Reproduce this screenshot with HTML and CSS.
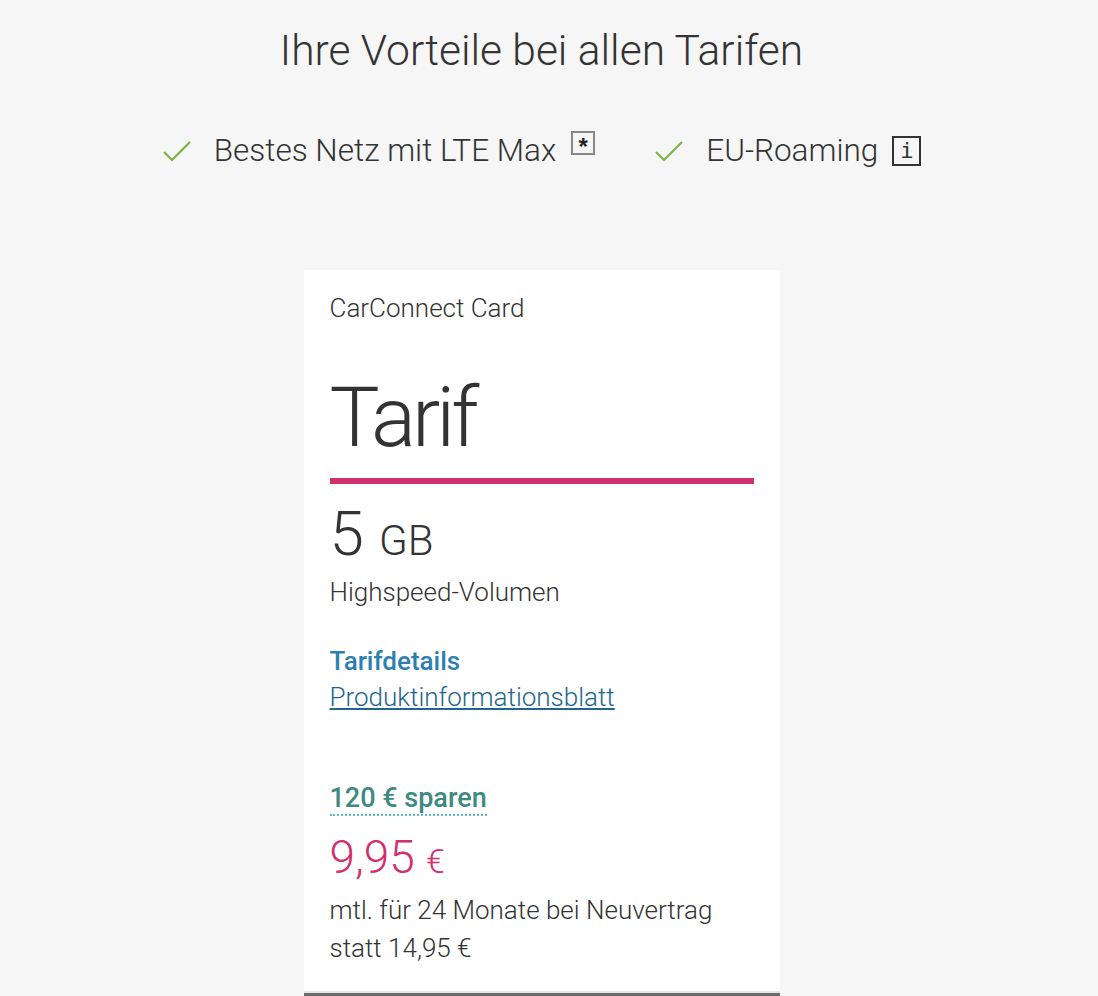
FILE: index.html
```html
<!DOCTYPE html>
<html lang="de">
<head>
<meta charset="UTF-8">
<meta name="viewport" content="width=device-width, initial-scale=1.0">
<title>CarConnect Tarif</title>
<link rel="stylesheet" href="styles.css">
</head>
<body>

<div class="page">
    <h1 class="title">Ihre Vorteile bei allen Tarifen</h1>

    <ul class="benefits">
        <li class="benefit">
            <svg class="check" width="30" height="24" viewBox="0 0 30 24"><path d="M2 13 L10 21 L28 3" fill="none" stroke="#7cb342" stroke-width="2.2"/></svg>
            <span>Bestes Netz mit LTE Max</span>
            <span class="star-box">*</span>
        </li>
        <li class="benefit">
            <svg class="check" width="30" height="24" viewBox="0 0 30 24"><path d="M2 13 L10 21 L28 3" fill="none" stroke="#7cb342" stroke-width="2.2"/></svg>
            <span>EU-Roaming</span>
            <span class="info-box">i</span>
        </li>
    </ul>

    <div class="card">
        <div class="card-body">
            <div class="product">CarConnect Card</div>
            <div class="tariff">Tarif</div>
            <div class="rule"></div>

            <div class="volume"><span class="volume-num">5</span> <span class="volume-unit">GB</span></div>
            <div class="volume-label">Highspeed-Volumen</div>

            <div class="links">
                <a href="#" class="details-link">Tarifdetails</a>
                <a href="#" class="pib-link">Produktinformationsblatt</a>
            </div>

            <div class="saving"><span>120 € sparen</span></div>
            <div class="price"><span class="price-num">9,95</span> <span class="price-cur">€</span></div>
            <div class="price-note">mtl. für 24 Monate bei Neuvertrag</div>
            <div class="price-note">statt 14,95 €</div>
        </div>
        <div class="card-foot"></div>
    </div>
</div>

</body>
</html>
```

FILE: styles.css
```css
body {
    margin: 0;
    background-color: #f6f6f6;
    font-family: Roboto, "Liberation Sans", sans-serif;
    color: #333;
}
.page {
    width: 1083px;
    display: flex;
    flex-direction: column;
    align-items: center;
}
.title {
    margin: 23px 0 0;
    font-size: 42.5px;
    font-weight: 300;
    line-height: 56px;
}
.benefits {
    list-style: none;
    margin: 52px 0 0;
    padding: 0;
    display: flex;
    gap: 59px;
}
.benefit {
    display: flex;
    align-items: center;
    font-size: 31.5px;
    font-weight: 300;
    line-height: 40px;
}
.check {
    margin-right: 22px;
}
.star-box {
    align-self: flex-start;
    margin-left: 15px;
    margin-top: 0;
    width: 20px;
    height: 20px;
    border: 2px solid #888;
    font-size: 24px;
    font-weight: bold;
    line-height: 28px;
    text-align: center;
    font-family: "Liberation Sans", sans-serif;
    color: #222;
}
.info-box {
    margin-left: 14px;
    width: 25px;
    height: 26px;
    border: 2px solid #333;
    font-size: 22px;
    line-height: 26px;
    text-align: center;
    font-family: "DejaVu Sans Mono", monospace;
}
.card {
    margin-top: 99px;
    width: 476px;
    background-color: #fff;
}
.card-body {
    padding: 22px 26px 24px;
}
.product {
    font-size: 26px;
    font-weight: 300;
    line-height: 32px;
}
.tariff {
    margin-top: 44px;
    font-size: 84px;
    font-weight: 300;
    letter-spacing: -4px;
    line-height: 100px;
}
.rule {
    margin-top: 10px;
    height: 6px;
    background-color: #d22f6e;
}
.volume {
    margin-top: 18px;
    font-size: 62px;
    font-weight: 300;
    line-height: 64px;
}
.volume-unit {
    font-size: 42px;
}
.volume-label {
    font-size: 26px;
    font-weight: 300;
    line-height: 38px;
}
.links {
    margin-top: 32px;
    display: flex;
    flex-direction: column;
    align-items: flex-start;
}
.details-link {
    font-size: 26px;
    font-weight: 500;
    line-height: 36px;
    color: #2d7fb0;
    text-decoration: none;
}
.pib-link {
    font-size: 26px;
    font-weight: 300;
    line-height: 36px;
    color: #22668f;
}
.saving {
    margin-top: 65px;
    font-size: 27px;
    font-weight: 500;
    line-height: 36px;
    color: #3e8a82;
}
.saving span {
    border-bottom: 2px dotted #5bb7e0;
}
.price {
    margin-top: 11px;
    font-size: 46px;
    color: #d22f6e;
    font-weight: 300;
    line-height: 60px;
}
.price-cur {
    font-size: 34px;
}
.price-note {
    font-size: 26px;
    font-weight: 300;
    line-height: 38px;
}
.card-foot {
    height: 4px;
    border-top: 2px solid #e6e6e6;
    background-color: #6b6b6b;
}
```
